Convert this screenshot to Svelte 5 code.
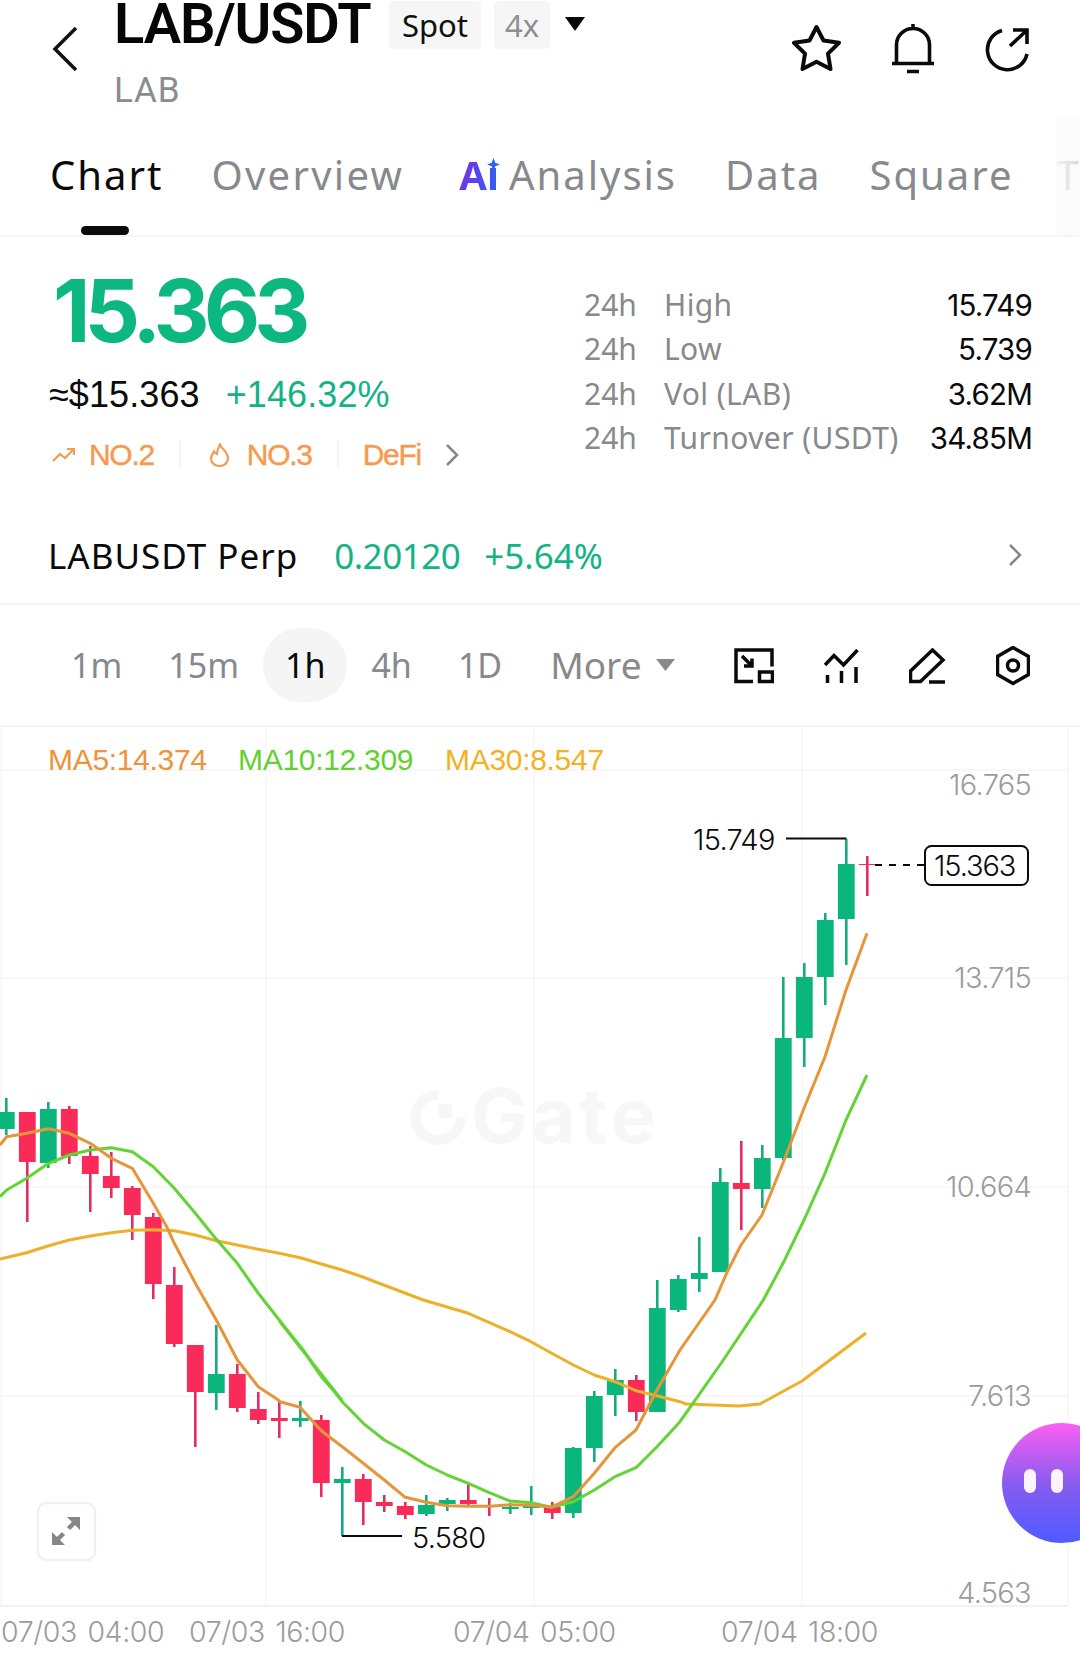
<script>
  const G = 'g', R = 'r';
  // color, wickTop, wickBottom, bodyTop, bodyBottom
  const raw = [
    [G,1098,1135,1112,1129],[R,1112,1222,1112,1162],[G,1102,1168,1109,1163],[R,1106,1164,1109,1156],
    [R,1146,1212,1156,1174],[R,1152,1198,1176,1188],[R,1186,1240,1188,1215],[R,1213,1299,1217,1284],
    [R,1267,1347,1285,1344],[R,1345,1447,1345,1392],[G,1325,1410,1374,1393],[R,1364,1412,1374,1408],
    [R,1392,1424,1409,1420],[R,1402,1438,1418,1421],[G,1401,1427,1418,1421],[R,1415,1497,1420,1483],
    [G,1467,1536,1479,1483],[R,1474,1525,1479,1502],[R,1495,1512,1502,1506],[R,1502,1519,1506,1515],
    [G,1495,1516,1505,1514],[G,1498,1511,1500,1504],[R,1484,1507,1500,1504],[R,1498,1516,1505,1507],
    [G,1503,1514,1507,1509],[G,1486,1515,1506,1508],[R,1502,1519,1507,1513],[G,1447,1518,1448,1513],
    [G,1391,1462,1396,1448],[G,1369,1416,1380,1395],[R,1375,1421,1380,1412],[G,1280,1412,1308,1412],
    [G,1275,1312,1279,1310],[G,1237,1292,1273,1279],[G,1168,1272,1182,1272],[R,1141,1230,1183,1189],
    [G,1145,1208,1158,1189],[G,977,1160,1038,1158],[G,963,1067,977,1038],[G,913,1005,920,977],
    [G,839,965,864,919],[R,856,896,864,865]
  ];
  const candles = raw.map((c, i) => ({ x: 6.3 + 21 * i, c: c[0], wt: c[1], wb: c[2], bt: c[3], bb: c[4] }));

  const z5 = (a) => a.map(([x, y]) => [x / 3, 1080 + y / 3]);
  const z6 = (a) => a.map(([x, y]) => [280 + x / 3, 1300 + y / 3]);
  const z7 = (a) => a.map(([x, y]) => [640 + x / 3, 800 + y / 3]);
  const toPts = (a) => a.map(([x, y]) => x.toFixed(1) + ',' + y.toFixed(1)).join(' ');

  const ma5 = toPts([
    ...z5([[0,195],[20,170],[80,160],[146,146],[208,160],[271,190],[334,235],[397,265],[460,370],[500,440],[523,490],[586,610],[649,720],[712,840],[775,920],[835,960]]),
    ...z6([[0,305],[60,322],[124,392],[187,440],[250,490],[313,540],[376,592],[439,607],[502,617],[565,619],[628,619],[690,614],[753,616],[815,621],[880,590],[943,520],[1005,443],[1068,390],[1131,270],[1200,150]]),
    ...z7([[225,1500],[262,1415],[303,1335],[366,1245],[429,1090],[492,925],[555,770],[618,570],[681,400]])
  ]);
  const ma10 = toPts([
    ...z5([[0,350],[20,330],[80,295],[146,250],[208,225],[271,210],[334,203],[397,215],[460,260],[523,325],[586,400],[649,478],[712,550],[775,640],[838,720],[901,800],[964,890],[1025,960]]),
    ...z6([[0,65],[62,140],[124,225],[187,305],[250,370],[313,420],[376,455],[439,495],[502,525],[565,550],[628,578],[690,603],[753,608],[815,622],[880,605],[943,570],[1005,530],[1068,503],[1131,440],[1200,365]]),
    [722,1362],
    ...z7([[370,1500],[429,1390],[492,1260],[555,1120],[618,960],[681,825]])
  ]);
  const ma30 = toPts([
    ...z5([[0,537],[80,518],[146,497],[208,480],[271,468],[334,458],[397,451],[460,449],[523,452],[586,465],[649,482],[712,495],[775,508],[838,520],[901,533],[964,552],[1027,570],[1080,588]]),
    ...z6([[430,0],[565,40],[690,95],[753,125],[815,160],[880,195],[943,225],[1005,245],[1068,272],[1131,287],[1200,305]]),
    [686,1404],[739,1406],[760,1404],[802,1381],[866,1333]
  ]);

  const hGrid = [770, 978, 1187, 1396];
  const vGrid = [1, 266, 534, 802, 1068];
  const axis = [['16.765',784],['13.715',977],['10.664',1186],['7.613',1395],['4.563',1592]];
  const dates = [['07/03 04:00',1],['07/03 16:00',189],['07/04 05:00',453],['07/04 18:00',721]];
  const stats = [['High','15.749'],['Low','5.739'],['Vol (LAB)','3.62M'],['Turnover (USDT)','34.85M']];
  const intervals = ['1m','15m','1h','4h','1D'];
</script>

<div class="page">
  <header class="head">
    <svg class="back" width="26" height="46" viewBox="0 0 26 46"><path d="M24 2 3 23l21 21" /></svg>
    <div class="title-col">
      <div class="title-row">
        <span class="title">LAB/USDT</span>
        <span class="chip spot">Spot</span>
        <span class="chip lev">4x</span>
        <svg class="caret" width="20" height="14" viewBox="0 0 20 14"><path d="M0 0h20L10 14z" /></svg>
      </div>
      <div class="base">LAB</div>
    </div>
    <div class="head-icons">
      <svg class="ico star" width="50" height="48" viewBox="0 0 50 48"><path d="M24.5 3 31.5 16.5 47 18.8 36 29.7 38.5 45 24.5 37.8 10.5 45 13 29.7 2 18.8 17.5 16.5z" /></svg>
      <svg class="ico bell" width="42" height="50" viewBox="0 0 42 50"><path d="M21 0v5M4.5 39V21a16.5 16.5 0 0 1 33 0v18M0 39.5h42M15 47.5h12" /></svg>
      <svg class="ico share" width="46" height="46" viewBox="0 0 46 46"><path d="M19 3.5A20 20 0 1 0 44 27M27 19 43 4M30 3h14v14" /></svg>
    </div>
  </header>

  <nav class="tabs">
    <span class="tab active">Chart</span>
    <span class="tab ov">Overview</span>
    <span class="tab ai-tab"><span class="ai">Aı<svg class="spark" width="13" height="13" viewBox="0 0 13 13"><path d="M6.5 0 8.3 4.7 13 6.5 8.3 8.3 6.5 13 4.7 8.3 0 6.5 4.7 4.7z" /></svg></span>Analysis</span>
    <span class="tab">Data</span>
    <span class="tab">Square</span>
    <span class="tab last-tab">T</span>
    <span class="indicator"></span>
    <span class="fade"></span>
  </nav>

  <section class="quote">
    <div class="left">
      <div class="price">15.363</div>
      <div class="sub"><span>≈$15.363</span><span class="pct">+146.32%</span></div>
      <div class="tags">
        <svg width="23" height="16" viewBox="0 0 23 16"><path d="M1 14 8 7l5 4 9-9M15 2h7v6" /></svg>
        <span class="tag t1">NO.2</span>
        <i class="sep"></i>
        <svg class="flame" width="21" height="24" viewBox="0 0 21 24"><path d="M11 1.5c1 4 8 7 8 14a8.5 7.5 0 0 1-17 0c0-3 2-5 3-7 1 1.5 2 2 3 2.5C8 8 9 5 11 1.5z" /></svg>
        <span class="tag t2">NO.3</span>
        <i class="sep"></i>
        <span class="tag">DeFi</span>
        <svg class="gt" width="14" height="24" viewBox="0 0 14 24"><path d="m2 2 10 10L2 22" /></svg>
      </div>
    </div>
    <div class="stats">
      {#each stats as s}
        <span class="k">24h</span><span class="k lab">{s[0]}</span><span class="v">{s[1]}</span>
      {/each}
    </div>
  </section>

  <section class="perp">
    <span class="perp-name">LABUSDT Perp</span>
    <span class="perp-val">0.20120</span>
    <span class="perp-pct">+5.64%</span>
    <svg class="perp-gt" width="14" height="24" viewBox="0 0 14 24"><path d="m2 2 10 10L2 22" /></svg>
  </section>

  <section class="toolbar">
    {#each intervals as it}
      <span class="iv" class:on={it === '1h'}>{it}</span>
    {/each}
    <span class="more">More<svg width="19" height="12" viewBox="0 0 19 12"><path d="M0 0h19L9.5 12z" /></svg></span>
    <div class="tools">
      <svg width="40" height="36" viewBox="0 0 40 36"><path d="M19 33.5H2V2h36v16.5M25.5 24h13v9.5h-13zM8 8l10 10M18 10.5V18h-8" /></svg>
      <svg width="35" height="35" viewBox="0 0 35 35"><path d="M1 16 10 6.5 19.5 16 33.5 1M3.5 26v8M17.5 22v12M32 18v16" /></svg>
      <svg width="37" height="36" viewBox="0 0 37 36"><path d="M1.5 23 23.5 2 34 12 11.5 33.5h-10zM20 34h16" /></svg>
      <svg width="34" height="40" viewBox="0 0 34 40"><path d="M17 1.5 32.5 10.5v18L17 37.5 1.5 28.5v-18z" /><circle cx="17" cy="19.5" r="5.5" /></svg>
    </div>
  </section>

  <section class="chart">
    <svg class="plot" width="1080" height="928" viewBox="0 727 1080 928">
      {#each hGrid as y}<line class="grid" x1="0" x2="1068" y1={y} y2={y} />{/each}
      {#each vGrid as x}<line class="grid" x1={x} x2={x} y1="727" y2="1606" />{/each}
      <line class="grid base-line" x1="0" x2="1068" y1="1606" y2="1606" />

      <g class="mark">
        <path class="ring" d="M438 1095A22.500 22.500 0 1 0 460.500 1117.500" />
        <rect x="438" y="1104" width="14" height="14" />
        <text x="471" y="1143">Gate</text>
      </g>

      <text class="ma m5" x="48" y="770">MA5:14.374</text>
      <text class="ma m10" x="238" y="770">MA10:12.309</text>
      <text class="ma m30" x="445" y="770">MA30:8.547</text>

      {#each candles as k}
        <line class="wick {k.c}" x1={k.x} x2={k.x} y1={k.wt} y2={k.wb} />
        <rect class="body {k.c}" x={k.x - 8.4} y={k.bt} width="16.800" height={k.bb - k.bt} />
      {/each}

      <polyline class="line l30" points={ma30} />
      <polyline class="line l10" points={ma10} />
      <polyline class="line l5" points={ma5} />

      {#each axis as a}<text class="axis" x="1031" y={a[1] + 10.500}>{a[0]}</text>{/each}
      {#each dates as d}<text class="date" x={d[1]} y="1642">{d[0]}</text>{/each}

      <path class="lead" d="M786 838.500h60.500" />
      <text class="note" x="693" y="850">15.749</text>
      <path class="lead" d="M342 1536h60" />
      <text class="note" x="412" y="1548">5.580</text>
      <path class="lead dash" d="M875 865h50" />
      <rect class="last-box" x="925" y="846" width="103" height="39" rx="6.500" />
      <text class="note last" x="934" y="876">15.363</text>

      <rect class="exp" x="38" y="1503" width="57" height="57" rx="8" />
      <g transform="translate(52 1517)" class="exp-i">
        <path d="M28 0v13L15 0zM0 28V15l13 13z" />
        <path class="shaft" d="M4 24l7.500-7.500M16.500 11.500 24 4" />
      </g>
    </svg>
    <div class="bot"><i></i><i></i></div>
  </section>
</div>

<style>
  :global(body) { margin: 0; background: #fff; }
  .page {
    width: 1080px; height: 1655px; overflow: hidden; background: #fff;
    font-family: "Noto Sans", "Liberation Sans", sans-serif; color: #0a0a0a;
  }
  svg { display: block; flex: none; }
  path, circle { fill: none; }

  .head { height: 116px; display: flex; box-sizing: border-box; padding-left: 52px; }
  .back { margin-top: 26px; }
  .back path { stroke: #111; stroke-width: 3.500; }
  .title-col { margin-left: 36px; }
  .title-row { display: flex; align-items: flex-start; height: 73px; }
  .title {
    font: 600 56px/48px Roboto, sans-serif; letter-spacing: -1.100px; color: #060606; width: 275px;
  }
  .chip {
    display: flex; align-items: center; justify-content: center; height: 48px; margin-top: 1px; border-radius: 5px;
    background: #f6f6f6; font-size: 31px; box-sizing: border-box;
  }
  .spot { width: 92px; color: #111; }
  .lev { width: 56px; margin-left: 13px; color: #8d8f92; }
  .caret { margin: 17px 0 0 15px; }
  .caret path { fill: #0a0a0a; }
  .base { font: 400 35px/36px Roboto, sans-serif; color: #8a8c8f; letter-spacing: 0.900px; }
  .head-icons { margin-left: auto; display: flex; width: 288px; padding-right: 51px; box-sizing: border-box; align-items: flex-start; justify-content: space-between; padding-top: 24px; }
  .ico path { stroke: #0a0a0a; stroke-width: 3.600; }
  .star path { stroke-linejoin: round; stroke-width: 4; }
  .share { margin-top: 3px; }

  .tabs {
    position: relative; height: 121px; box-sizing: border-box; border-bottom: 2px solid #f6f6f6;
    padding: 34px 0 0 50px; display: flex; gap: 48px; overflow: hidden; white-space: nowrap;
    font-size: 40px; line-height: 50px; color: #87898c; letter-spacing: 2px;
  }
  .tab { flex: none; }
  .tab.active { color: #0a0a0a; }
  .ov { letter-spacing: 2.300px; }
  .ai-tab { margin-left: 7px; display: flex; align-items: baseline; }
  .ai {
    position: relative; font-weight: 700; margin-right: 10px; letter-spacing: 0;
    background: linear-gradient(100deg, #7a2ee6, #2d62f2);
    -webkit-background-clip: text; background-clip: text; color: transparent;
  }
  .last-tab { margin-left: -5px; }
  .spark { position: absolute; right: -1px; top: 8px; }
  .spark path { fill: #2d62f2; }
  .indicator { position: absolute; left: 81px; bottom: 0; width: 48px; height: 9px; border-radius: 5px; background: #0a0a0a; }
  .fade {
    position: absolute; right: 0; top: 0; bottom: 0; width: 24px;
    background: linear-gradient(90deg, rgba(250,250,250,.92), rgba(250,250,250,.7));
  }

  .quote { height: 284px; display: flex; justify-content: space-between; padding: 0 47px 0 50px; }
  .left { display: flex; flex-direction: column; }
  .price {
    font: 700 87px/80px Inter, sans-serif; color: #0db880; letter-spacing: -5.900px; margin: 34px 0 0 3px;
  }
  .sub {
    display: flex; gap: 26px; margin: 22px 0 0 -1px; font: 400 36px/44px "Liberation Sans", sans-serif; color: #0a0a0a; letter-spacing: 0.100px;
  }
  .pct { color: #14b386; }
  .tags { display: flex; align-items: center; margin: 23px 0 0 2px; height: 30px; }
  .tags svg path { stroke: #f59a50; stroke-width: 2.200; }
  .tag { font: 400 30px/30px "Liberation Sans", sans-serif; color: #f59a50; letter-spacing: -1.300px; -webkit-text-stroke: 0.400px #f59a50; }
  .t1 { margin-left: 14px; }
  .t2 { margin-left: 17px; }
  .sep { width: 2px; height: 28px; background: #f5f5f5; margin: 0 25px; }
  .sep + .tag { margin-left: -1px; }
  .flame { margin-left: 3px; }
  .tags .gt { margin-left: 24px; }
  .tags .gt path { stroke: #85878a; stroke-width: 2.500; }
  .stats {
    width: 449px; display: grid; grid-template-columns: 80px auto 1fr; grid-auto-rows: 44.300px; align-items: center;
    margin-top: 46px; align-self: flex-start; font-size: 30px; line-height: 44px;
  }
  .k { color: #87898c; }
  .lab { letter-spacing: 0.400px; }
  .v { color: #0a0a0a; text-align: right; font: 400 29.500px/44px Inter, sans-serif; letter-spacing: -0.800px; margin-right: 1px; }

  .perp {
    height: 84px; box-sizing: border-box; border-bottom: 2px solid #f5f5f5; display: flex; align-items: flex-start;
    padding: 13px 58px 0 48px; font-size: 35px; line-height: 44px;
  }
  .perp-name { letter-spacing: 1px; }
  .perp-val { margin-left: 36px; color: #12b386; letter-spacing: -0.500px; }
  .perp-pct { margin-left: 24px; color: #12b386; }
  .perp-gt { margin: 9px 0 0 auto; }
  .perp-gt path { stroke: #85878a; stroke-width: 2.500; }

  .toolbar {
    height: 122px; box-sizing: border-box; border-bottom: 2px solid #f5f5f5; display: flex; align-items: center; gap: 2px;
    padding: 2px 50px 0 49px; font-size: 34px; color: #87898c;
  }
  .iv { height: 74px; line-height: 74px; padding: 0 22px; border-radius: 37px; margin-top: -2px; }
  .iv.on { background: #f5f5f5; color: #0a0a0a; }
  .more { display: flex; align-items: center; gap: 14px; margin: -3px 0 0 24px; font-size: 37px; }
  .more path { fill: #87898c; }
  .tools { margin-left: auto; display: flex; align-items: center; gap: 50px; }
  .tools path, .tools circle { stroke: #0a0a0a; stroke-width: 3.500; }

  .chart { position: relative; height: 929px; }
  .plot { position: absolute; left: 0; top: 0; }
  .grid { stroke: #f6f6f6; stroke-width: 1.500; }
  .base-line { stroke: #f2f2f2; stroke-width: 2; }
  .mark .ring { fill: none; stroke: #f6f7f7; stroke-width: 10; }
  .mark rect { fill: #f6f7f7; }
  .mark text { font: 700 76px Inter, sans-serif; fill: #f6f7f7; letter-spacing: 3.800px; }
  .ma { font: 400 30px "Liberation Sans", sans-serif; letter-spacing: -0.300px; }
  .m5 { fill: #f0923a; }
  .m10 { fill: #62d12f; }
  .m30 { fill: #f4b223; }
  .wick { stroke-width: 2.600; }
  .wick.g { stroke: #14ab80; }
  .wick.r { stroke: #de2f60; }
  .body.g { fill: #0ab67c; }
  .body.r { fill: #fb2b59; }
  .line { fill: none; stroke-width: 3; stroke-linejoin: round; }
  .l5 { stroke: #e6953a; }
  .l10 { stroke: #63d336; }
  .l30 { stroke: #edb02a; }
  .axis { font: 350 29px Inter, sans-serif; letter-spacing: -0.700px; fill: #9a9c9e; text-anchor: end; }
  .date { font: 350 28.500px Inter, sans-serif; letter-spacing: -0.400px; word-spacing: 3px; fill: #9a9c9e; }
  .note { font: 350 29px Inter, sans-serif; letter-spacing: -0.700px; fill: #0a0a0a; }
  .note.last { letter-spacing: -1.100px; }
  .lead { stroke: #0a0a0a; stroke-width: 2; fill: none; }
  .dash { stroke-dasharray: 7 7; }
  .last-box { fill: #fff; stroke: #0a0a0a; stroke-width: 2; }
  .exp { fill: #fff; stroke: #f1f1f1; stroke-width: 2.500; }
  .exp-i path { fill: #878787; }
  .exp-i .shaft { fill: none; stroke: #878787; stroke-width: 4.500; }

  .bot {
    position: absolute; left: 1002px; top: 696px; width: 120px; height: 120px; border-radius: 60px;
    background: linear-gradient(180deg, #fb5ff2, #8a5bf0 50%, #4e5cff);
    display: flex; gap: 15px; padding: 46px 0 0 22px; box-sizing: border-box;
  }
  .bot i { width: 12px; height: 24px; border-radius: 6px; background: #fdf3ff; }
</style>
